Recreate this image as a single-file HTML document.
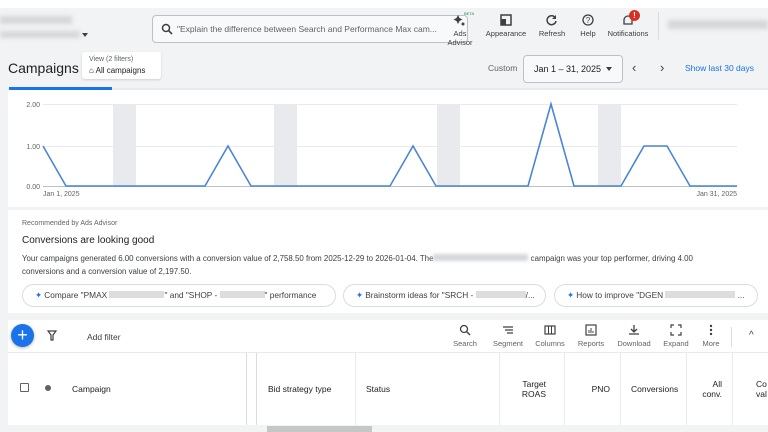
<!DOCTYPE html>
<html><head><meta charset="utf-8">
<style>
*{box-sizing:border-box;margin:0;padding:0}
body{width:768px;height:432px;overflow:hidden;background:#f1f3f4;font-family:"Liberation Sans",sans-serif;color:#3c4043;position:relative}
.abs{position:absolute}
.blur{background:#d5d7da;filter:blur(2px)}
.ib{position:absolute;text-align:center;font-size:7.5px;color:#3c4043;line-height:8.5px}
.ib svg{display:block;margin:0 auto 4px}
.chip{position:absolute;top:284px;height:23px;border:1px solid #dadce0;border-radius:12px;background:#fff;font-size:8.3px;line-height:21px;padding-left:12px;white-space:nowrap;overflow:hidden}
.tb{position:absolute;top:324px;text-align:center;font-size:7.5px;color:#5f6368}
.tb svg{display:block;margin:0 auto 3px}
.th{position:absolute;font-size:8.5px;color:#202124}
</style></head><body>
<div class="abs" style="left:0;top:0;width:768px;height:8px;background:#fff"></div>
<div class="abs blur" style="left:0;top:16px;width:72px;height:8px"></div>
<div class="abs blur" style="left:0;top:31px;width:80px;height:7px"></div>
<div class="abs" style="left:82px;top:33px;border:3px solid transparent;border-top:4px solid #3c4043"></div>
<div class="abs" style="left:152px;top:15px;width:316px;height:28px;border:1px solid #bdc1c6;border-radius:4px;background:#f8f9fa;font-size:8.5px;line-height:26px;padding-left:24px;color:#5f6368;white-space:nowrap;overflow:hidden">"Explain the difference between Search and Performance Max cam...</div>
<svg class="abs" style="left:161px;top:23px" width="12" height="12" viewBox="0 0 12 12"><circle cx="5" cy="5" r="3.5" fill="none" stroke="#3c4043" stroke-width="1.5"/><path d="M7.5 7.5L11 11" stroke="#3c4043" stroke-width="1.6"/></svg>
<div class="ib" style="left:440px;top:14px;width:40px"><svg width="14" height="12"><path d="M5 1l1.5 3 3 1.5-3 1.5L5 10 3.5 7 .5 5.5l3-1.5z" fill="#3c4043"/><circle cx="10" cy="10" r="1.5" fill="#3c4043"/></svg>Ads<br>Advisor</div>
<div class="abs" style="left:464px;top:11px;font-size:4px;color:#1e8e3e">BETA</div>
<div class="ib" style="left:484px;top:14px;width:44px"><svg width="14" height="12"><rect x="2" y="1" width="10" height="10" fill="none" stroke="#3c4043" stroke-width="1.5"/><rect x="2" y="5" width="5" height="6" fill="#3c4043"/></svg>Appearance</div>
<div class="ib" style="left:534px;top:14px;width:36px"><svg width="14" height="12"><path d="M10.5 4A4.5 4.5 0 1 0 11 7" fill="none" stroke="#3c4043" stroke-width="1.5"/><path d="M11 1v4H7z" fill="#3c4043"/></svg>Refresh</div>
<div class="ib" style="left:573px;top:14px;width:30px"><svg width="14" height="12"><circle cx="7" cy="6" r="5" fill="none" stroke="#3c4043" stroke-width="1.3"/><text x="7" y="9" font-size="8" text-anchor="middle" fill="#3c4043" font-family="Liberation Sans">?</text></svg>Help</div>
<div class="ib" style="left:603px;top:14px;width:50px"><svg width="14" height="12"><path d="M3 10V6a4 4 0 0 1 8 0v4z" fill="none" stroke="#3c4043" stroke-width="1.3"/></svg>Notifications</div>
<div class="abs" style="left:629px;top:10px;width:11px;height:11px;border-radius:50%;background:#d93025;color:#fff;font-size:8px;font-weight:bold;text-align:center;line-height:11px">!</div>
<div class="abs" style="left:658px;top:12px;width:1px;height:28px;background:#dadce0"></div>
<div class="abs blur" style="left:668px;top:20px;width:100px;height:9px"></div>
<div class="abs" style="left:8px;top:60px;font-size:14px;color:#202124">Campaigns</div>
<div class="abs" style="left:82px;top:52px;width:79px;height:27px;background:#fff;border-radius:3px;box-shadow:0 1px 2px rgba(0,0,0,.15)"></div>
<div class="abs" style="left:89px;top:56px;font-size:7px;color:#5f6368">View (2 filters)</div>
<div class="abs" style="left:89px;top:66px;font-size:8px;color:#202124">⌂ All campaigns</div>
<div class="abs" style="left:488px;top:63px;font-size:8.5px;color:#5f6368">Custom</div>
<div class="abs" style="left:523px;top:55px;width:100px;height:28px;border:1px solid #bdc1c6;border-radius:4px;background:#f8f9fa;font-size:9px;line-height:26px;padding-left:10px;color:#202124">Jan 1 – 31, 2025</div>
<div class="abs" style="left:606px;top:67px;border:3px solid transparent;border-top:4px solid #3c4043"></div>
<div class="abs" style="left:632px;top:60px;font-size:13px;color:#3c4043">‹</div>
<div class="abs" style="left:660px;top:60px;font-size:13px;color:#3c4043">›</div>
<div class="abs" style="left:685px;top:63px;font-size:8.5px;color:#1a73e8">Show last 30 days</div>
<div class="abs" style="left:8px;top:88px;width:760px;height:2px;background:#e8eaed"></div>
<div class="abs" style="left:9px;top:87px;width:103px;height:3px;background:#1a73e8"></div>
<div class="abs" style="left:8px;top:90px;width:760px;height:117px;background:#fff"></div>
<svg class="abs" style="left:0;top:90px" width="768" height="117" viewBox="0 90 768 117">
<g fill="#e8eaed"><rect x="113" y="104" width="23" height="82"/><rect x="274" y="104" width="23" height="82"/><rect x="437" y="104" width="23" height="82"/><rect x="598" y="104" width="23" height="82"/></g>
<g stroke="#e8eaed" stroke-width="1"><path d="M43 104.5H737M43 146.5H737"/></g>
<path d="M43 186.5H737" stroke="#bdc1c6"/>
<polyline fill="none" stroke="#4a86d4" stroke-width="1.6" points="43,146 66,186 205,186 228,146 251,186 390,186 413,146 436,186 528,186 551,104 574,186 621,186 644,146 667,146 690,186 737,186"/>
<g font-family="Liberation Sans" font-size="7" fill="#5f6368"><text x="40" y="107" text-anchor="end">2.00</text><text x="40" y="149" text-anchor="end">1.00</text><text x="40" y="189" text-anchor="end">0.00</text><text x="43" y="196">Jan 1, 2025</text><text x="737" y="196" text-anchor="end">Jan 31, 2025</text></g>
</svg>
<div class="abs" style="left:8px;top:210px;width:760px;height:103px;background:#fff"></div>
<div class="abs" style="left:22px;top:220px;font-size:7px;color:#5f6368">Recommended by Ads Advisor</div>
<div class="abs" style="left:22px;top:235px;font-size:10px;color:#202124">Conversions are looking good</div>
<div class="abs" style="left:22px;top:252px;font-size:7.9px;color:#3c4043;line-height:13px;width:715px">Your campaigns generated 6.00 conversions with a conversion value of 2,758.50 from 2025-12-29 to 2026-01-04. The<span style="display:inline-block;width:95px;height:7px;background:#d5d7da;filter:blur(1.5px)"></span> campaign was your top performer, driving 4.00 conversions and a conversion value of 2,197.50.</div>
<div class="chip" style="left:22px;width:314px"><span style="color:#1a73e8">✦</span> Compare "PMAX <span style="display:inline-block;width:55px;height:7px;background:#ddd"></span>" and "SHOP - <span style="display:inline-block;width:45px;height:7px;background:#ddd"></span>" performance</div>
<div class="chip" style="left:343px;width:203px"><span style="color:#1a73e8">✦</span> Brainstorm ideas for "SRCH - <span style="display:inline-block;width:50px;height:7px;background:#ddd"></span>/...</div>
<div class="chip" style="left:554px;width:204px"><span style="color:#1a73e8">✦</span> How to improve "DGEN <span style="display:inline-block;width:70px;height:7px;background:#ddd"></span> ...</div>
<div class="abs" style="left:8px;top:320px;width:760px;height:112px;background:#fff"></div>
<div class="abs" style="left:8px;top:352px;width:760px;height:1px;background:#e8eaed"></div>
<div class="abs" style="left:11px;top:324px;width:23px;height:23px;border-radius:50%;background:#1a73e8;color:#fff;font-size:18px;text-align:center;line-height:22px;box-shadow:0 1px 3px rgba(0,0,0,.3)">+</div>
<svg class="abs" style="left:47px;top:330px" width="10" height="11"><path d="M1 1h8L6 5v5H4V5z" fill="none" stroke="#3c4043" stroke-width="1.2"/></svg>
<div class="abs" style="left:87px;top:332px;font-size:8.5px;color:#3c4043">Add filter</div>
<div class="tb" style="left:450px;width:30px"><svg width="12" height="12"><circle cx="5" cy="5" r="3.5" fill="none" stroke="#3c4043" stroke-width="1.3"/><path d="M7.5 7.5L11 11" stroke="#3c4043" stroke-width="1.4"/></svg>Search</div>
<div class="tb" style="left:490px;width:36px"><svg width="12" height="12"><path d="M1 3h10M3 6h8M5 9h6" stroke="#3c4043" stroke-width="1.2"/></svg>Segment</div>
<div class="tb" style="left:533px;width:34px"><svg width="12" height="12"><rect x="1" y="2" width="10" height="8" fill="none" stroke="#3c4043" stroke-width="1.2"/><path d="M4.5 2v8M7.5 2v8" stroke="#3c4043"/></svg>Columns</div>
<div class="tb" style="left:575px;width:32px"><svg width="12" height="12"><rect x="1" y="1" width="10" height="10" fill="none" stroke="#3c4043" stroke-width="1.2"/><path d="M4 9V6M6 9V4M8 9V7" stroke="#3c4043"/></svg>Reports</div>
<div class="tb" style="left:616px;width:36px"><svg width="12" height="12"><path d="M6 1v6M3 5l3 3 3-3M1 10h10" fill="none" stroke="#3c4043" stroke-width="1.3"/></svg>Download</div>
<div class="tb" style="left:660px;width:32px"><svg width="12" height="12"><path d="M1 4V1h3M8 1h3v3M11 8v3H8M4 11H1V8" fill="none" stroke="#3c4043" stroke-width="1.2"/></svg>Expand</div>
<div class="tb" style="left:699px;width:24px"><svg width="12" height="12"><g fill="#3c4043"><circle cx="6" cy="2" r="1.2"/><circle cx="6" cy="6" r="1.2"/><circle cx="6" cy="10" r="1.2"/></g></svg>More</div>
<div class="abs" style="left:731px;top:327px;width:1px;height:20px;background:#dadce0"></div>
<div class="abs" style="left:749px;top:330px;font-size:10px;color:#3c4043">^</div>
<div class="abs" style="left:20px;top:383px;width:9px;height:9px;border:1.2px solid #5f6368;border-radius:1px"></div>
<div class="abs" style="left:45px;top:385px;width:6px;height:6px;border-radius:50%;background:#5f6368"></div>
<div class="th" style="left:72px;top:384px">Campaign</div>
<div class="abs" style="left:246px;top:353px;width:1px;height:72px;background:#dadce0"></div>
<div class="abs" style="left:256px;top:353px;width:1px;height:72px;background:#dadce0"></div>
<div class="th" style="left:268px;top:384px">Bid strategy type</div>
<div class="abs" style="left:355px;top:353px;width:1px;height:72px;background:#e8eaed"></div>
<div class="th" style="left:366px;top:384px">Status</div>
<div class="abs" style="left:499px;top:353px;width:1px;height:72px;background:#e8eaed"></div>
<div class="th" style="left:510px;top:379px;width:36px;text-align:right;line-height:10px">Target<br>ROAS</div>
<div class="abs" style="left:564px;top:353px;width:1px;height:72px;background:#e8eaed"></div>
<div class="th" style="left:590px;top:384px;width:20px;text-align:right">PNO</div>
<div class="abs" style="left:620px;top:353px;width:1px;height:72px;background:#e8eaed"></div>
<div class="th" style="left:631px;top:384px">Conversions</div>
<div class="abs" style="left:686px;top:353px;width:1px;height:72px;background:#e8eaed"></div>
<div class="th" style="left:700px;top:379px;width:22px;text-align:right;line-height:10px">All<br>conv.</div>
<div class="abs" style="left:732px;top:353px;width:1px;height:72px;background:#e8eaed"></div>
<div class="th" style="left:756px;top:379px;line-height:10px">Co<br>val</div>
<div class="abs" style="left:8px;top:425px;width:760px;height:7px;background:#f1f3f4"></div>
<div class="abs" style="left:267px;top:426px;width:105px;height:6px;background:#c4c7c5"></div>
</body></html>
